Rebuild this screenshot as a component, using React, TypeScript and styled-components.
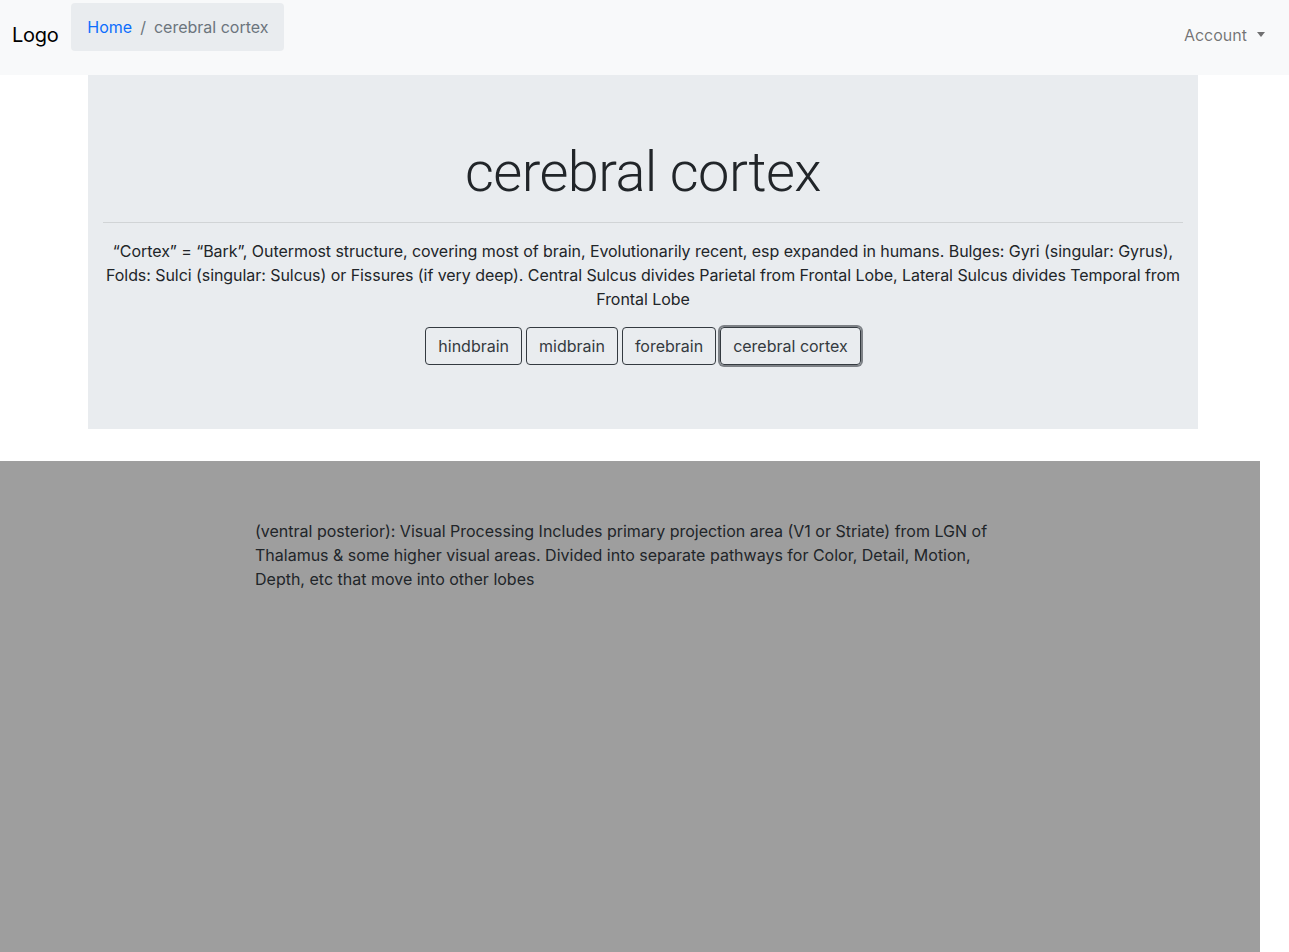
import React from "react";
import styled, { createGlobalStyle } from "styled-components";

const GlobalStyle = createGlobalStyle`
  html, body {
    margin: 0;
    padding: 0;
    background: #fff;
  }
  body {
    font-family: Inter, "Liberation Sans", "Noto Sans", sans-serif;
    font-size: 16px;
    line-height: 1.5;
    color: #212529;
  }
  * {
    box-sizing: border-box;
  }
`;

const NavBar = styled.nav`
  display: flex;
  align-items: center;
  height: 75px;
  padding: 3px 12px 8px 12px;
  background: #f8f9fa;
`;

const Brand = styled.a`
  font-size: 20px;
  line-height: 30px;
  color: #000;
  margin-right: 13px;
  text-decoration: none;
  letter-spacing: -0.3px;
`;

const Crumbs = styled.ol`
  display: flex;
  align-items: center;
  list-style: none;
  margin: 0 0 16px 0;
  padding: 12px 16px;
  height: 48px;
  background: #e9ecef;
  border-radius: 4px;
  li + li::before {
    content: "/";
    color: #6c757d;
    padding: 0 8px;
  }
`;

const Crumb = styled.li<{ $active?: boolean }>`
  color: ${(p) => (p.$active ? "#6c757d" : "#0d6efd")};
  a {
    color: #0d6efd;
    text-decoration: none;
  }
`;

const Spacer = styled.div`
  flex: 1;
`;

const AccountToggle = styled.a`
  display: flex;
  align-items: center;
  padding: 8px 12px 8px 8px;
  color: rgba(0, 0, 0, 0.55);
  text-decoration: none;
  cursor: pointer;
  &::after {
    content: "";
    display: inline-block;
    margin-left: 10px;
    border-top: 5px solid;
    border-right: 4.5px solid transparent;
    border-left: 4.5px solid transparent;
    border-bottom: 0;
    transform: translateY(-1px);
  }
`;

const Jumbotron = styled.section`
  width: 1110px;
  margin: 0 91px 32px 88px;
  padding: 64px 15px;
  background: #e9ecef;
  text-align: center;
`;

const Title = styled.h1`
  margin: 0;
  font-family: Roboto, Inter, sans-serif;
  font-size: 56px;
  font-weight: 300;
  line-height: 1.2;
  letter-spacing: -0.6px;
`;

const Rule = styled.hr`
  margin: 16px 0;
  border: 0;
  border-top: 1px solid rgba(0, 0, 0, 0.1);
`;

const Lead = styled.p`
  margin: 0 0 16px 0;
  letter-spacing: -0.06px;
`;

const Buttons = styled.div`
  display: flex;
  justify-content: center;
  gap: 4px;
`;

const RegionButton = styled.button<{ $focused?: boolean }>`
  font-family: inherit;
  font-size: 16px;
  line-height: 24px;
  padding: 6px 12px;
  color: #343a40;
  background: transparent;
  border: 1px solid #343a40;
  border-radius: 4px;
  cursor: pointer;
  box-shadow: ${(p) => (p.$focused ? "0 0 0 2px #7d8186" : "none")};
`;

const Detail = styled.section`
  width: 1260px;
  min-height: 500px;
  padding: 58px 0 0 255px;
  background: #9e9e9e;
`;

const DetailText = styled.p`
  margin: 0;
  max-width: 750px;
  color: #212529;
`;

const regions = ["hindbrain", "midbrain", "forebrain", "cerebral cortex"];

const App = () => {
  const current = "cerebral cortex";
  return (
    <>
      <GlobalStyle />
      <NavBar>
        <Brand href="#">Logo</Brand>
        <Crumbs>
          <Crumb>
            <a href="#">Home</a>
          </Crumb>
          <Crumb $active>{current}</Crumb>
        </Crumbs>
        <Spacer />
        <AccountToggle>Account</AccountToggle>
      </NavBar>
      <Jumbotron>
        <Title>{current}</Title>
        <Rule />
        <Lead>
          “Cortex” = “Bark”, Outermost structure, covering most of brain,
          Evolutionarily recent, esp expanded in humans. Bulges: Gyri (singular:
          Gyrus), Folds: Sulci (singular: Sulcus) or Fissures (if very deep).
          Central Sulcus divides Parietal from Frontal Lobe, Lateral Sulcus
          divides Temporal from Frontal Lobe
        </Lead>
        <Buttons>
          {regions.map((r) => (
            <RegionButton key={r} $focused={r === current}>
              {r}
            </RegionButton>
          ))}
        </Buttons>
      </Jumbotron>
      <Detail>
        <DetailText>
          (ventral posterior): Visual Processing Includes primary projection
          area (V1 or Striate) from LGN of Thalamus &amp; some higher visual
          areas. Divided into separate pathways for Color, Detail, Motion,
          Depth, etc that move into other lobes
        </DetailText>
      </Detail>
    </>
  );
};

export default App;
